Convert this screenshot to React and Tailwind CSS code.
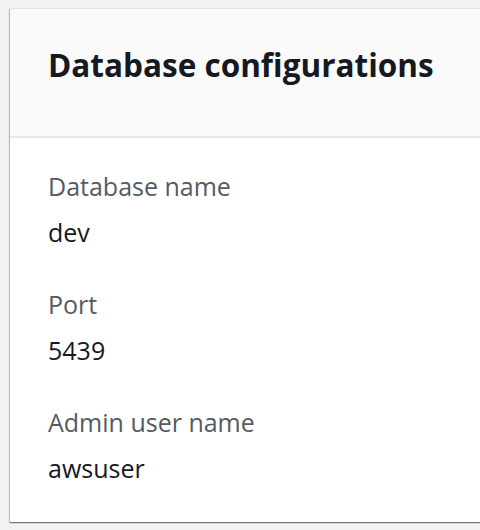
const fields = [
  { label: "Database name", value: "dev" },
  { label: "Port", value: "5439" },
  { label: "Admin user name", value: "awsuser" },
];

const App = () => {
  return (
    <div className="min-h-[530px] bg-[#f2f3f3] pt-2 pl-[10px] font-['Open_Sans',sans-serif]">
      <div className="bg-white border-t border-[#e4e7e7] shadow-[0_1px_1px_0_rgba(0,28,36,0.35),1px_1px_1px_0_rgba(0,28,36,0.15),-1px_1px_1px_0_rgba(0,28,36,0.2)]">
        <div className="bg-[#fafafa] border-b-2 border-[#e6e9e9] h-[129px] flex items-center px-[38px] pb-[16px]">
          <h2 className="text-[31.5px] font-bold text-[#16191f] leading-none">Database configurations</h2>
        </div>
        <div className="flex flex-col gap-[26px] px-[38px] pt-[25px] pb-[31px]">
          {fields.map((f) => (
            <div key={f.label} className="flex flex-col">
              <span className="text-[25px] leading-[46px] text-[#545b64]">{f.label}</span>
              <span className="text-[25px] leading-[46px] text-[#16191f]">{f.value}</span>
            </div>
          ))}
        </div>
      </div>
    </div>
  );
};

export default App;
